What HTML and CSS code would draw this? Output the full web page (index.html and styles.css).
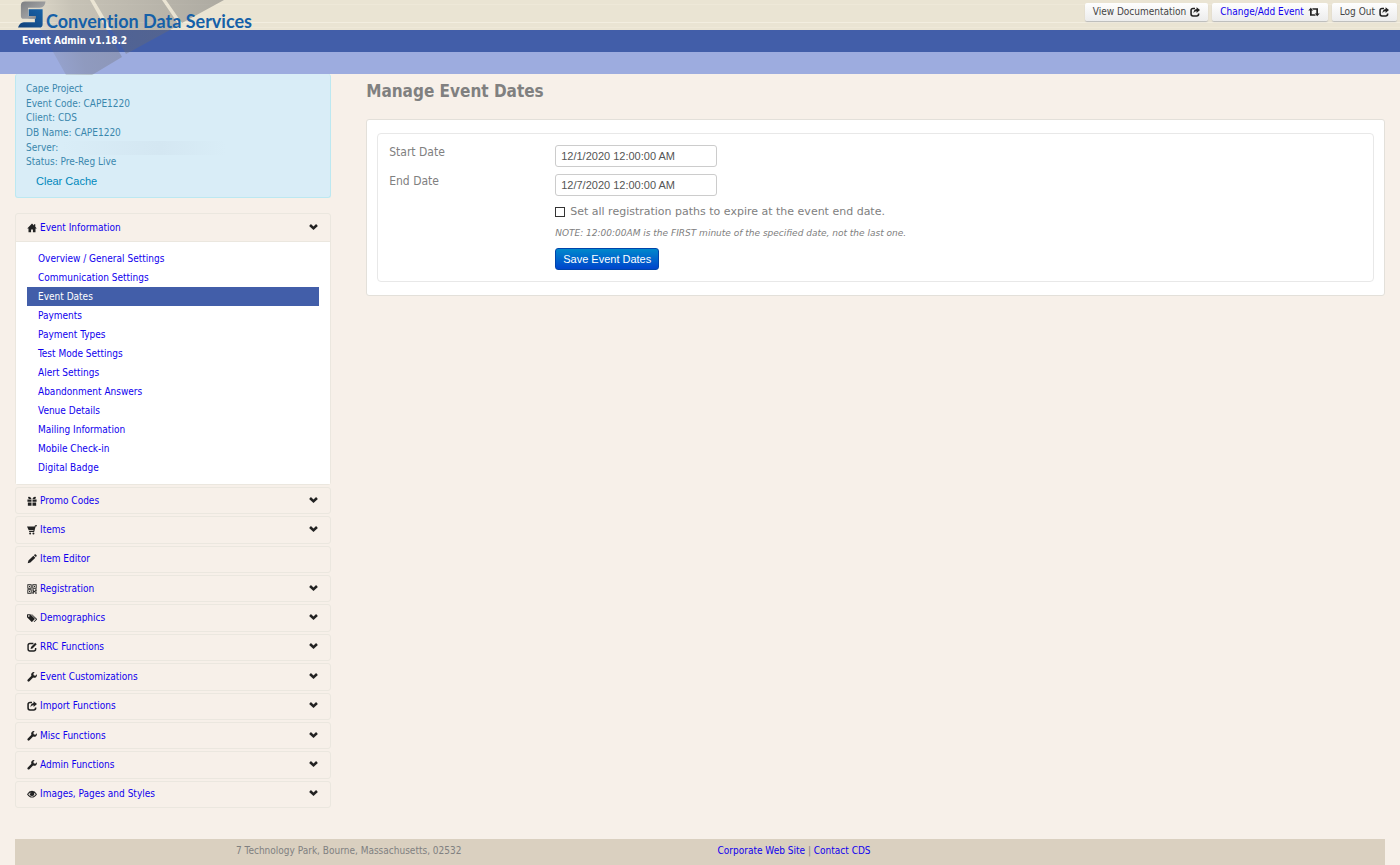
FILE: index.html
```html
<!DOCTYPE html>
<html lang="en">
<head>
<meta charset="utf-8">
<title>Event Admin - Manage Event Dates</title>
<link rel="stylesheet" href="styles.css">
</head>
<body>
<svg class="sprite" aria-hidden="true">
  <defs>
    <symbol id="i-chevron" viewBox="0 0 14 14"><path d="M3 2.500 7 6.300 11 2.500 13.800 5.300 7 11.800.2 5.300z"/></symbol>
    <symbol id="i-home" viewBox="0 0 14 14"><path d="M7 .8.3 7.600h1.800V13h3.600V9h2.600v4h3.600V7.600h1.800L11.600 5.400V1.800H9.800v1.800z"/></symbol>
    <symbol id="i-gift" viewBox="0 0 14 14"><path d="M.6 5h5.700v3.200H.6zM7.700 5h5.700v3.200H7.700zM1.200 9.200h5.100v4.300H1.200zM7.700 9.200h5.100v4.300H7.700z"/><path d="M6.300 4.300C5 .2 1.500.4 1.500 2.300c0 1.600 2.500 2 4.800 2zM7.700 4.300C9 .2 12.500.4 12.500 2.300c0 1.600-2.500 2-4.800 2z"/></symbol>
    <symbol id="i-cart" viewBox="0 0 14 14"><path d="M0 2h10.600l.6-1.500H14v1.300h-1.800L10 9.800H3.200L2.700 8.300h6.200l.2-.8H2.400z"/><circle cx="4.400" cy="11.900" r="1.400"/><circle cx="9" cy="11.900" r="1.400"/></symbol>
    <symbol id="i-pencil" viewBox="0 0 14 14"><path d="M1 13l1-3.800 6.900-6.900 2.800 2.800L4.800 12zM9.700 1.600 11 .5q.8-.5 1.400.1l1 1q.6.6 0 1.400l-1.100 1.300z"/></symbol>
    <symbol id="i-qr" viewBox="0 0 14 14"><path fill-rule="evenodd" d="M.5.500h6v6h-6zM1.700 1.700v3.600h3.600V1.700zM7.500.500h6v6h-6zM8.700 1.700v3.600h3.600V1.700zM.5 7.500h6v6h-6zM1.700 8.700v3.600h3.600V8.700z"/><path d="M2.700 2.700h1.600v1.600H2.700zM9.700 2.700h1.600v1.600H9.700zM2.700 9.700h1.600v1.600H2.700zM7.500 7.500h2v2h2v-2h2v3h-2v1h2v2h-2v-2h-2v2h-2v-3h1v-1h-1z"/></symbol>
    <symbol id="i-tags" viewBox="0 0 14 14"><path fill-rule="evenodd" d="M0 2.400q0-.7.700-.7h4l6 6q.5.500 0 1L7.300 12.300q-.5.500-1 0L0 6zM2.500 3a1.100 1.100 0 1 0 .1 0z"/><path d="M5.900 1.700h1l6.800 6.400q.5.600 0 1.200l-3.300 3.200q-.6.400-1.200 0l3.300-3.800z"/></symbol>
    <symbol id="i-edit" viewBox="0 0 14 14"><path fill="none" stroke="currentColor" stroke-width="2" d="M9 2H4.200Q1.500 2 1.500 4.600v5.200q0 2.700 2.700 2.700h5.200q2.700 0 2.700-2.700V8.300"/><path d="M5 9.800l.6-2.700 5.900-5.900 2.100 2.100-5.900 5.900z"/></symbol>
    <symbol id="i-wrench" viewBox="0 0 14 14"><path d="M13.700 3.300a3.700 3.700 0 0 1-5.100 4.500l-5.200 5.100a1.600 1.600 0 0 1-2.300-2.300l5.100-5.200A3.700 3.700 0 0 1 10.700.3L8.900 2.400l.5 2.200 2.200.5z"/></symbol>
    <symbol id="i-share" viewBox="0 0 14 14"><path fill="none" stroke="currentColor" stroke-width="2.200" d="M7 2.200H4.200Q1.500 2.200 1.500 4.700v5.100q0 2.700 2.700 2.700h5.200q2.700 0 2.700-2.700V9"/><path d="M9.200.2 14 4.300 9.200 8.400V6.100Q6.200 5.900 4.900 8.800 5 3.300 9.200 2.700z"/></symbol>
    <symbol id="i-retweet" viewBox="0 0 16 14"><path d="M3.500 1 7 5H4.800v5.100h4l1.800 2.200H2.400V5H0zM5.300 1.700h8.300V9H16l-3.500 4L9 9h2.200V3.900H7.100z"/></symbol>
    <symbol id="i-eye" viewBox="0 0 14 14"><path fill-rule="evenodd" d="M0 7.200Q3 2.500 7 2.500t7 4.700Q11 12 7 12T0 7.200zM1.700 7.400Q4 10.700 7 10.700t5.300-3.300Q11.400 6 10 5.100q1 4.500-3 4.600Q3 9.600 4 5.100 2.600 6 1.700 7.400zM5.600 4.600q-.8.800-.6 2 .7-.1.800-1.100z"/></symbol>
  </defs>
</svg>

<header class="header">
  <div class="header-top">
    <a class="brand" href="#">
      <svg class="brand-mark" viewBox="0 0 29 27" aria-hidden="true">
        <defs>
          <linearGradient id="steel" x1="0" y1="0" x2="1" y2="1"><stop offset="0" stop-color="#7d7f82"/><stop offset=".6" stop-color="#9fa0a2"/><stop offset="1" stop-color="#6f7377"/></linearGradient>
          <linearGradient id="navy" x1="0" y1="1" x2="1" y2="0"><stop offset="0" stop-color="#104078"/><stop offset="1" stop-color="#1762a8"/></linearGradient>
        </defs>
        <path fill="url(#navy)" d="M11 8h14.500v15.500Q25.500 27 22 27H0q1.500-5 6-5.500h11.500v-4H11z"/>
        <path fill="url(#steel)" d="M7 0h21.500q-.5 6-6 6.500H10.500v8.500h8v3H6q-3 0-3-3V4q0-4 4-4z"/>
      </svg>
      <span class="brand-name">Convention Data Services</span>
    </a>
    <nav class="tools" aria-label="Account">
      <a class="tool" href="#">View Documentation <svg class="icon"><use href="#i-share"/></svg></a>
      <a class="tool tool-link" href="#">Change/Add Event <svg class="icon icon-wide"><use href="#i-retweet"/></svg></a>
      <a class="tool" href="#">Log Out <svg class="icon"><use href="#i-share"/></svg></a>
    </nav>
  </div>
  <div class="header-title">Event Admin v1.18.2</div>
  <div class="header-band"></div>
  <svg class="tiles" viewBox="0 0 240 75" aria-hidden="true">
    <defs>
      <linearGradient id="fade" gradientUnits="userSpaceOnUse" x1="30" y1="40" x2="220" y2="0"><stop offset="0" stop-color="#6c6c6c" stop-opacity=".06"/><stop offset=".25" stop-color="#6c6c6c" stop-opacity=".28"/><stop offset="1" stop-color="#6c6c6c" stop-opacity=".48"/></linearGradient>
    </defs>
    <path fill="url(#fade)" d="M24 0h66l32 57-30 18H66zM94 0h68l17 25-53 29zM166 0h58l-42 23z"/>
  </svg>
</header>

<div class="layout">
  <aside class="sidebar">
    <section class="info">
      <div class="info-lines">
        <div>Cape Project</div>
        <div>Event Code: CAPE1220</div>
        <div>Client: CDS</div>
        <div>DB Name: CAPE1220</div>
        <div class="server">Server: <span class="redacted"></span></div>
        <div>Status: Pre-Reg Live</div>
      </div>
      <button class="clear" type="button">Clear Cache</button>
    </section>

    <nav class="menu" aria-label="Event">
      <div class="group open">
        <a class="row" href="#"><svg class="icon"><use href="#i-home"/></svg><span>Event Information</span><svg class="icon chevron"><use href="#i-chevron"/></svg></a>
        <ul class="submenu">
          <li><a href="#">Overview / General Settings</a></li>
          <li><a href="#">Communication Settings</a></li>
          <li><a class="active" href="#" aria-current="page">Event Dates</a></li>
          <li><a href="#">Payments</a></li>
          <li><a href="#">Payment Types</a></li>
          <li><a href="#">Test Mode Settings</a></li>
          <li><a href="#">Alert Settings</a></li>
          <li><a href="#">Abandonment Answers</a></li>
          <li><a href="#">Venue Details</a></li>
          <li><a href="#">Mailing Information</a></li>
          <li><a href="#">Mobile Check-in</a></li>
          <li><a href="#">Digital Badge</a></li>
        </ul>
      </div>
      <div class="groups">
        <a class="row group" href="#"><svg class="icon"><use href="#i-gift"/></svg><span>Promo Codes</span><svg class="icon chevron"><use href="#i-chevron"/></svg></a>
        <a class="row group" href="#"><svg class="icon"><use href="#i-cart"/></svg><span>Items</span><svg class="icon chevron"><use href="#i-chevron"/></svg></a>
        <a class="row group" href="#"><svg class="icon"><use href="#i-pencil"/></svg><span>Item Editor</span></a>
        <a class="row group" href="#"><svg class="icon"><use href="#i-qr"/></svg><span>Registration</span><svg class="icon chevron"><use href="#i-chevron"/></svg></a>
        <a class="row group" href="#"><svg class="icon"><use href="#i-tags"/></svg><span>Demographics</span><svg class="icon chevron"><use href="#i-chevron"/></svg></a>
        <a class="row group" href="#"><svg class="icon"><use href="#i-edit"/></svg><span>RRC Functions</span><svg class="icon chevron"><use href="#i-chevron"/></svg></a>
        <a class="row group" href="#"><svg class="icon"><use href="#i-wrench"/></svg><span>Event Customizations</span><svg class="icon chevron"><use href="#i-chevron"/></svg></a>
        <a class="row group" href="#"><svg class="icon"><use href="#i-share"/></svg><span>Import Functions</span><svg class="icon chevron"><use href="#i-chevron"/></svg></a>
        <a class="row group" href="#"><svg class="icon"><use href="#i-wrench"/></svg><span>Misc Functions</span><svg class="icon chevron"><use href="#i-chevron"/></svg></a>
        <a class="row group" href="#"><svg class="icon"><use href="#i-wrench"/></svg><span>Admin Functions</span><svg class="icon chevron"><use href="#i-chevron"/></svg></a>
        <a class="row group" href="#"><svg class="icon"><use href="#i-eye"/></svg><span>Images, Pages and Styles</span><svg class="icon chevron"><use href="#i-chevron"/></svg></a>
      </div>
    </nav>
  </aside>

  <main class="main">
    <h1>Manage Event Dates</h1>
    <div class="well">
      <form class="panel">
        <label for="start">Start Date</label>
        <input class="text" id="start" type="text" value="12/1/2020 12:00:00 AM">
        <label for="end">End Date</label>
        <input class="text" id="end" type="text" value="12/7/2020 12:00:00 AM">
        <div class="extras">
          <label class="check"><input type="checkbox"><span>Set all registration paths to expire at the event end date.</span></label>
          <p class="note">NOTE: 12:00:00AM is the FIRST minute of the specified date, not the last one.</p>
          <button class="save" type="button">Save Event Dates</button>
        </div>
      </form>
    </div>
  </main>
</div>

<footer class="footer">
  <div class="address">7 Technology Park, Bourne, Massachusetts, 02532</div>
  <div><a href="#">Corporate Web Site</a> | <a href="#">Contact CDS</a></div>
</footer>
</body>
</html>
```
FILE: styles.css
```css
* { box-sizing: border-box; }
body {
  margin: 0;
  min-height: 100vh;
  display: flex;
  flex-direction: column;
  background: #f7f0e9;
  color: #808080;
  font: 10px/14px "DejaVu Sans Condensed", "DejaVu Sans", Verdana, sans-serif;
}
a { color: #1000ee; text-decoration: none; }
.sprite { position: absolute; width: 0; height: 0; }
.icon { width: 10px; height: 10px; flex: none; fill: currentColor; color: #222; }
.icon-wide { width: 12px; }

.header { position: relative; background: linear-gradient(#425ea9 0 52px, #9dacdf 52px); }
.header-top {
  height: 30px;
  display: flex;
  justify-content: space-between;
  padding: 0 3px 0 18px;
  background: repeating-linear-gradient(#eae4d3 0 4px, #eee8d8 4px 5px, #eae4d3 5px 22px, #f3eee0 22px 23px);
}
.brand { display: flex; position: relative; z-index: 1; padding-top: 1px; }
.brand-mark { width: 28px; height: 27px; }
.brand-name {
  padding-top: 10px;
  font: 700 18px/20px Lato, sans-serif;
  font-variant-ligatures: none;
  color: #1560a8;
}
.tools { display: flex; gap: 4px; padding-top: 3px; }
.tool {
  display: flex;
  align-items: center;
  gap: 4px;
  height: 18px;
  padding: 0 8px;
  border-radius: 2px;
  background: linear-gradient(#fefefe, #ececec);
  box-shadow: 0 1px 1px #bbb;
  color: #444;
}
.tool-link { color: #1000ee; }
.header-title {
  position: relative;
  z-index: 1;
  height: 22px;
  padding-left: 22px;
  color: #fff;
  font-weight: 700;
  line-height: 22px;
}
.header-band { height: 22px; }
.tiles {
  position: absolute;
  top: 0;
  left: 0;
  width: 240px;
  height: 75px;
}

.layout {
  flex: 1;
  display: grid;
  grid-template-columns: 23.08% minmax(0, 1fr);
  column-gap: 35px;
  padding: 0 15px;
}
.info {
  margin-bottom: 15px;
  padding: 8px 10px;
  border: 1px solid #bce8f1;
  border-top: 0;
  border-radius: 3px;
  background: #d9edf7;
  color: #3a87ad;
}
.info-lines { display: grid; grid-auto-rows: 1fr; min-height: 88px; }
.server { display: flex; }
.redacted { width: 165px; margin-left: 3px; background: linear-gradient(90deg, #d9edf7, #d4e7f2 60%, #d9edf7); }
.clear {
  display: block;
  margin: 4px 0 0;
  padding: 0 10px;
  border: 0;
  background: none;
  color: #0088bb;
  font: 11px/15px "Liberation Sans", Arial, sans-serif;
}

.menu { display: flex; flex-direction: column; gap: 2px; }
.group { border: 1px solid #ebe7df; border-radius: 3px; }
.groups { display: grid; grid-auto-rows: 1fr; gap: 2px; min-height: 321px; }
.row { display: flex; align-items: center; gap: 3px; padding: 0 11px; }
.open .row { height: 27px; }
.chevron { width: 9px; margin: 0 1px 2px auto; }
.submenu {
  margin: 0;
  padding: 7px 11px;
  list-style: none;
  background: #fff;
  border-top: 1px solid #ebe7df;
}
.submenu a { display: block; padding: 0 11px; line-height: 19px; }
.submenu .active { background: #425ea9; color: #fff; }

h1 { margin: 5px 0 16px; font-size: 17px; font-weight: 700; line-height: 24px; }
.well { padding: 13px 10px; border: 1px solid #e3e0da; border-radius: 3px; background: #fff; }
.panel {
  display: grid;
  grid-template-columns: 166px minmax(0, 1fr);
  row-gap: 7px;
  padding: 11px;
  border: 1px solid #e8e8e8;
  border-radius: 4px;
  font-size: 12px;
  line-height: 15px;
}
.text {
  width: 162px;
  height: 22px;
  padding: 0 5px;
  border: 1px solid #ccc;
  border-radius: 3px;
  color: #555;
  font: 11px/15px "Liberation Sans", Arial, sans-serif;
}
.extras { grid-column: 2; }
.check { display: flex; align-items: center; gap: 5px; margin-top: 1px; }
.check input { appearance: none; width: 10px; height: 10px; margin: 0; border: 1px solid #333; background: #fff; }
.check span { font-family: "DejaVu Sans", Verdana, sans-serif; font-size: 11px; }
.note { margin: 7px 0; font-family: "DejaVu Sans", Verdana, sans-serif; font-size: 9px; font-style: italic; }
.save {
  height: 22px;
  padding: 0 7px;
  border: 1px solid #0044aa;
  border-radius: 3px;
  background: linear-gradient(#0088cc, #0044cc);
  color: #fff;
  font: 11px/15px "Liberation Sans", Arial, sans-serif;
}

.footer {
  display: grid;
  grid-template-columns: 1fr 1fr;
  column-gap: 35px;
  height: 26px;
  margin: 0 15px;
  padding-top: 5px;
  background: #dad0c0;
}
.address { text-align: center; }
```
